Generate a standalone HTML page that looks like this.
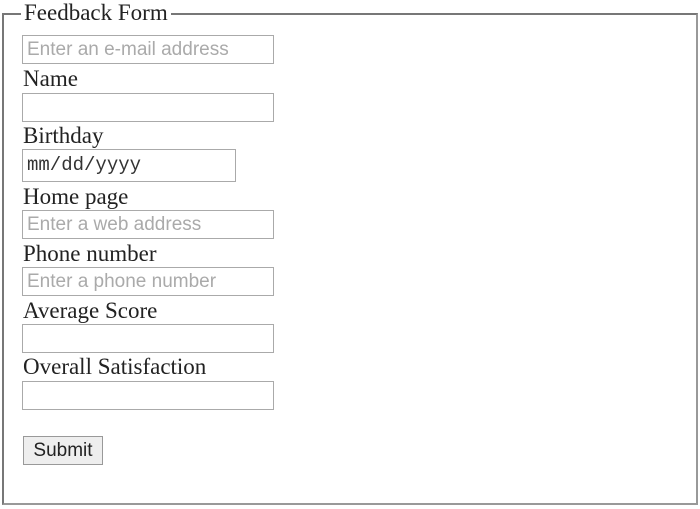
<!DOCTYPE html>
<html><head><style>
body{margin:0;width:700px;height:509px;background:#fff;position:relative;overflow:hidden;font-family:"Liberation Serif",serif;}
.fs{position:absolute;left:2px;top:13px;width:692px;height:488px;border:2px solid #777;border-right-color:#999;border-bottom-color:#999;}
.lg{position:absolute;left:21px;top:2px;background:#fff;padding:0 3px;font-size:23px;color:#222;line-height:22px;}
.lb{position:absolute;left:23px;font-size:23px;color:#222;line-height:22px;}
.in{position:absolute;left:22px;width:246px;height:27px;border:1.5px solid #aaa;box-sizing:content-box;font-family:"Liberation Sans",sans-serif;font-size:19px;color:#aaa;line-height:27px;padding-left:4px;white-space:nowrap;overflow:hidden;}
.btn{position:absolute;left:23px;top:436px;width:78px;height:27px;border:1px solid #999;background:#eee;font-family:"Liberation Sans",sans-serif;font-size:19px;color:#222;text-align:center;line-height:27px;}
</style></head><body>
<div class="fs"></div>
<div class="lg">Feedback Form</div>
<div class="in" style="top:35px">Enter an e-mail address</div>
<div class="lb" style="top:68px">Name</div>
<div class="in" style="top:93px"></div>
<div class="lb" style="top:125px">Birthday</div>
<div class="in" style="top:149px;width:208px;height:31px;line-height:31px;color:#333;font-family:'Liberation Mono',monospace;font-size:19px">mm/dd/yyyy</div>
<div class="lb" style="top:186px">Home page</div>
<div class="in" style="top:210px">Enter a web address</div>
<div class="lb" style="top:243px">Phone number</div>
<div class="in" style="top:267px">Enter a phone number</div>
<div class="lb" style="top:300px">Average Score</div>
<div class="in" style="top:324px"></div>
<div class="lb" style="top:356px">Overall Satisfaction</div>
<div class="in" style="top:381px"></div>
<div class="btn">Submit</div>
</body></html>
